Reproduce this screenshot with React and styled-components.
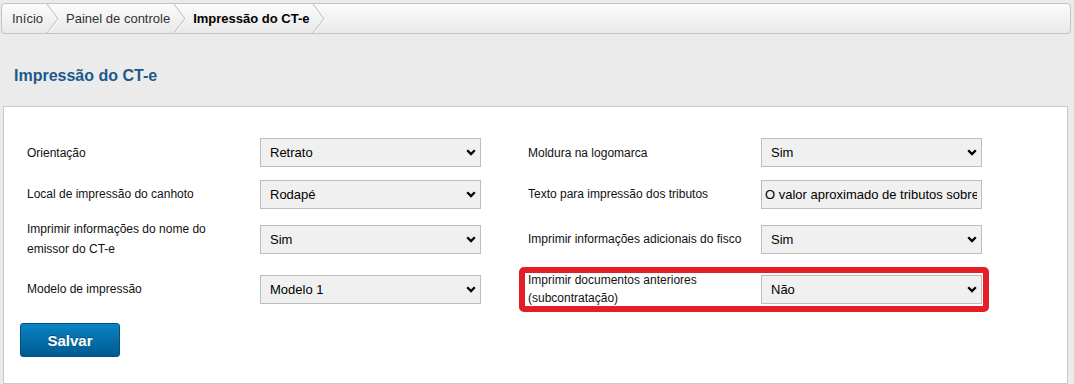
import React from "react";
import styled, { createGlobalStyle } from "styled-components";

const GlobalStyle = createGlobalStyle`
  html, body {
    margin: 0;
    padding: 0;
    background: #ebebeb;
    font-family: "Liberation Sans", Arial, sans-serif;
  }
  * { box-sizing: border-box; }
`;

const Page = styled.div`
  width: 1074px;
  height: 384px;
  overflow: hidden;
  padding: 3px 3px 0 1px;
  background: #ebebeb;
`;

const Breadcrumb = styled.nav`
  display: flex;
  align-items: stretch;
  height: 31px;
  border: 1px solid #c3c3c3;
  border-radius: 4px;
  background: linear-gradient(#fbfbfb, #e9e9e9);
  padding-left: 10px;
  font-size: 13px;
`;

const Crumb = styled.span`
  display: flex;
  align-items: center;
  color: ${(p) => (p.$current ? "#000" : "#333")};
  font-weight: ${(p) => (p.$current ? "bold" : "normal")};
`;

const Sep = styled.svg`
  flex: none;
  margin: 0 7px 0 2px;
`;

const Separator = () => (
  <Sep width="14" height="29" viewBox="0 0 14 29">
    <polyline points="2,0 13,14.5 2,29" fill="none" stroke="#ffffff" strokeWidth="1.4" transform="translate(1,0)" />
    <polyline points="2,0 13,14.5 2,29" fill="none" stroke="#c4c4c4" strokeWidth="1.1" />
  </Sep>
);

const Title = styled.h1`
  margin: 32px 0 0 13px;
  font-size: 16px;
  line-height: 20px;
  font-weight: bold;
  color: #1b5a8b;
`;

const Panel = styled.section`
  margin: 20px 3px 0 2px;
  background: #fff;
  border: 1px solid #c8c8c8;
  padding: 25px 16px 26px 16px;
`;

const FormGrid = styled.div`
  display: grid;
  grid-template-columns: 501px 501px;
  grid-template-rows: 41px 42px 48px 52px;
`;

const Field = styled.div`
  position: relative;
  display: grid;
  grid-template-columns: 240px 221px;
  align-items: center;

  ${(p) =>
    p.$highlight &&
    `
    &::after {
      content: "";
      position: absolute;
      top: 4px;
      bottom: 3px;
      left: -2px;
      right: 33px;
      border: 6px solid #e41e24;
      border-radius: 5px;
      pointer-events: none;
    }
  `}
`;

const Label = styled.label`
  padding: 0 15px 0 7px;
  font-size: 12px;
  line-height: ${(p) => (p.$tight ? "18px" : "20px")};
  color: #111;
`;

const SelectWrap = styled.div`
  position: relative;
  height: 29px;
`;

const Select = styled.select`
  appearance: none;
  -webkit-appearance: none;
  width: 100%;
  height: 29px;
  margin: 0;
  padding: 0 24px 0 9px;
  border: 1px solid #bdbdbd;
  border-radius: 0;
  background: #f0f0f0;
  font-family: "Liberation Sans", Arial, sans-serif;
  font-size: 13px;
  color: #000;
  outline: none;
`;

const Chevron = styled.svg`
  position: absolute;
  right: 5px;
  top: 11px;
  pointer-events: none;
`;

const TextInput = styled.input`
  width: 100%;
  height: 29px;
  margin: 0;
  padding: 0 4px 0 3px;
  border: 1px solid #bdbdbd;
  border-radius: 0;
  background: #f0f0f0;
  font-family: "Liberation Sans", Arial, sans-serif;
  font-size: 13px;
  color: #000;
  outline: none;
`;

const SaveButton = styled.button`
  display: block;
  margin-top: 8px;
  width: 100px;
  height: 34px;
  border: 1px solid #02507f;
  border-radius: 3px;
  background: linear-gradient(#0a83c4, #005a90);
  color: #fff;
  font-family: "Liberation Sans", Arial, sans-serif;
  font-size: 15px;
  font-weight: bold;
  text-shadow: 0 -1px 0 rgba(0, 0, 0, 0.35);
  cursor: pointer;
`;

const SelectBox = ({ value }) => (
  <SelectWrap>
    <Select defaultValue={value}>
      <option>{value}</option>
    </Select>
    <Chevron width="10" height="7" viewBox="0 0 10 7">
      <polyline points="1.2,1.2 5,5 8.8,1.2" fill="none" stroke="#000" strokeWidth="2.3" />
    </Chevron>
  </SelectWrap>
);

export default function App() {
  return (
    <>
      <GlobalStyle />
      <Page>
        <Breadcrumb>
          <Crumb>Início</Crumb>
          <Separator />
          <Crumb>Painel de controle</Crumb>
          <Separator />
          <Crumb $current>Impressão do CT-e</Crumb>
          <Separator />
        </Breadcrumb>
        <Title>Impressão do CT-e</Title>
        <Panel>
          <FormGrid>
            <Field>
              <Label>Orientação</Label>
              <SelectBox value="Retrato" />
            </Field>
            <Field>
              <Label>Moldura na logomarca</Label>
              <SelectBox value="Sim" />
            </Field>
            <Field>
              <Label>Local de impressão do canhoto</Label>
              <SelectBox value="Rodapé" />
            </Field>
            <Field>
              <Label>Texto para impressão dos tributos</Label>
              <TextInput readOnly value="O valor aproximado de tributos sobre este serviço é de" />
            </Field>
            <Field>
              <Label>Imprimir informações do nome do emissor do CT-e</Label>
              <SelectBox value="Sim" />
            </Field>
            <Field>
              <Label>Imprimir informações adicionais do fisco</Label>
              <SelectBox value="Sim" />
            </Field>
            <Field>
              <Label>Modelo de impressão</Label>
              <SelectBox value="Modelo 1" />
            </Field>
            <Field $highlight>
              <Label $tight>Imprimir documentos anteriores (subcontratação)</Label>
              <SelectBox value="Não" />
            </Field>
          </FormGrid>
          <SaveButton>Salvar</SaveButton>
        </Panel>
      </Page>
    </>
  );
}
